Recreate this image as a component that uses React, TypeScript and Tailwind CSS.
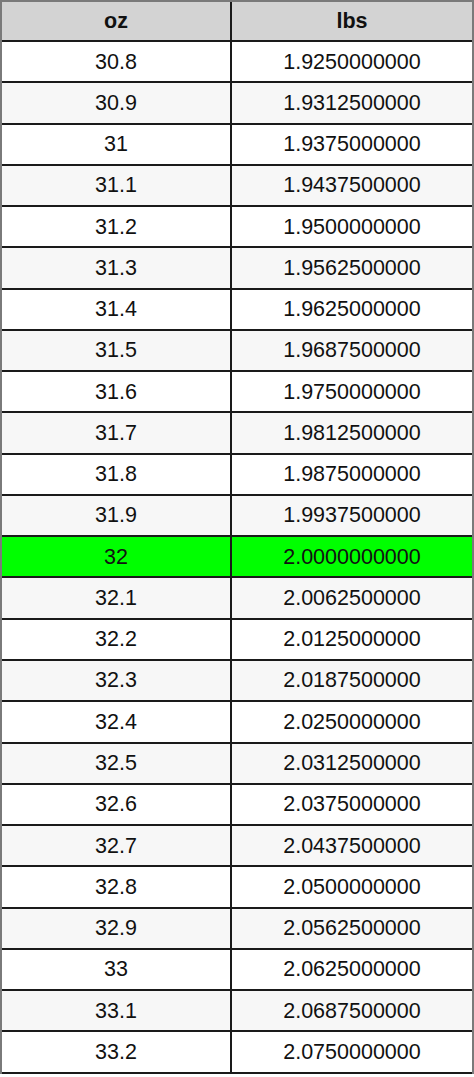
import React from "react";

const rows: [string, string][] = [
    ["30.8", "1.9250000000"],
    ["30.9", "1.9312500000"],
    ["31", "1.9375000000"],
    ["31.1", "1.9437500000"],
    ["31.2", "1.9500000000"],
    ["31.3", "1.9562500000"],
    ["31.4", "1.9625000000"],
    ["31.5", "1.9687500000"],
    ["31.6", "1.9750000000"],
    ["31.7", "1.9812500000"],
    ["31.8", "1.9875000000"],
    ["31.9", "1.9937500000"],
    ["32", "2.0000000000"],
    ["32.1", "2.0062500000"],
    ["32.2", "2.0125000000"],
    ["32.3", "2.0187500000"],
    ["32.4", "2.0250000000"],
    ["32.5", "2.0312500000"],
    ["32.6", "2.0375000000"],
    ["32.7", "2.0437500000"],
    ["32.8", "2.0500000000"],
    ["32.9", "2.0562500000"],
    ["33", "2.0625000000"],
    ["33.1", "2.0687500000"],
    ["33.2", "2.0750000000"],
];

export default function App() {
    return (
        <div
            className="w-[474px] bg-white text-[21.5px] text-[#111]"
            style={{ fontFamily: '"Liberation Sans", Arial, sans-serif' }}
        >
            <div className="border-t-2 border-x-2 border-[#7a7a7a]">
                {/* header */}
                <div className="grid grid-cols-[230px_1fr] h-[40px] bg-[#d3d3d3] border-b-2 border-[#1a1a1a] font-bold">
                    <div className="flex items-center justify-center border-r-2 border-[#1a1a1a]">oz</div>
                    <div className="flex items-center justify-center">lbs</div>
                </div>

                {rows.map(([oz, lbs], i) => {
                    const highlight = oz === "32";
                    const bg = highlight ? "bg-[#00ff00]" : i % 2 === 0 ? "bg-white" : "bg-[#f7f7f7]";
                    return (
                        <div
                            key={oz}
                            className={`grid grid-cols-[230px_1fr] h-[41.28px] border-b-2 border-[#1a1a1a] ${bg}`}
                        >
                            <div className="flex items-center justify-center border-r-2 border-[#1a1a1a]">{oz}</div>
                            <div className="flex items-center justify-center">{lbs}</div>
                        </div>
                    );
                })}
            </div>
        </div>
    );
}
